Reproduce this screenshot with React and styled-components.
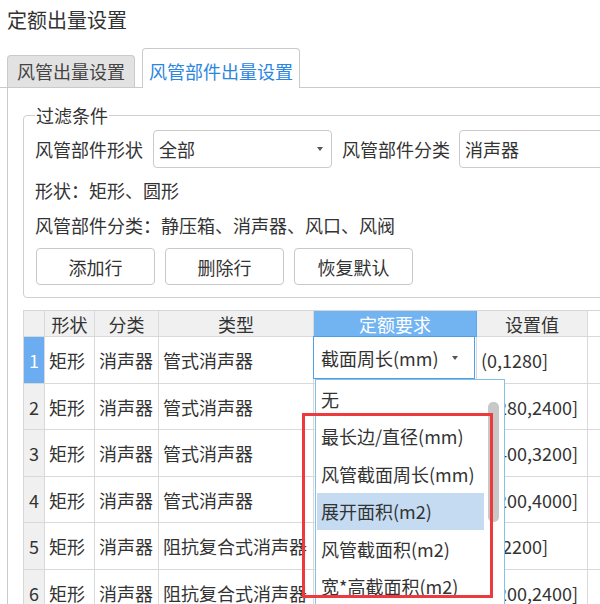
import React from 'react';
import styled, { createGlobalStyle } from 'styled-components';

const GlobalStyle = createGlobalStyle`
  html, body { margin: 0; padding: 0; background: #fff; }
  body { font-family: "Noto Sans CJK SC", "Noto Sans", sans-serif; color: #333; }
  * { box-sizing: border-box; }
`;

const Window = styled.div`
  width: 600px;
  height: 604px;
  overflow: hidden;
  background: #fff;
`;

const Title = styled.div`
  height: 40px;
  line-height: 40px;
  padding-left: 7px;
  font-size: 20px;
  color: #333;
`;

const TabBar = styled.div`
  display: flex;
  align-items: flex-end;
  height: 48px;
  padding-left: 7px;
  border-bottom: 1px solid #cacaca;
`;

const Tab = styled.div`
  font-size: 18px;
  line-height: 30px;
  text-align: center;
  border: 1px solid #cacaca;
  border-bottom: none;
  border-radius: 4px 4px 0 0;
  width: ${p => (p.$active ? '158px' : '128px')};
  height: ${p => (p.$active ? '40px' : '32px')};
  padding-top: ${p => (p.$active ? '7px' : '0')};
  margin-left: ${p => (p.$active ? '7px' : '0')};
  margin-bottom: ${p => (p.$active ? '-1px' : '0')};
  background: ${p => (p.$active ? '#fff' : '#e2e2e2')};
  color: ${p => (p.$active ? '#2a86e0' : '#444')};
`;

const Panel = styled.div`
  margin-left: 7px;
  border-left: 1px solid #cacaca;
  padding: 16px 0 0 15px;
  height: 520px;
`;

const FilterSet = styled.fieldset`
  margin: 0;
  width: 700px;
  min-width: 0;
  padding: 0 12px 12px 11px;
  border: 1px solid #cfcfcf;
  border-radius: 4px;
  display: flex;
  flex-direction: column;
  gap: 10px;
`;

const Legend = styled.legend`
  padding: 0 1px;
  font-size: 18px;
  line-height: 22px;
  color: #333;
`;

const FieldRow = styled.div`
  display: flex;
  align-items: center;
  margin-top: 4px;
  height: 38px;
`;

const Label = styled.span`
  font-size: 18px;
  width: ${p => p.$w || 'auto'};
  margin-left: ${p => p.$ml || '0'};
  white-space: nowrap;
`;

const Select = styled.div`
  display: flex;
  align-items: center;
  justify-content: space-between;
  width: ${p => p.$w};
  height: 38px;
  border: 1px solid #cbcbcb;
  border-radius: 4px;
  padding: 0 8px 0 5px;
  font-size: 18px;
  background: #fff;
`;

const Caret = styled.span`
  width: 0;
  height: 0;
  border-left: 3.5px solid transparent;
  border-right: 3.5px solid transparent;
  border-top: 4px solid #555;
`;

const InfoLine = styled.div`
  font-size: 18px;
  line-height: 25px;
  white-space: nowrap;
`;

const Buttons = styled.div`
  display: flex;
  gap: 10px;
  padding-left: 1px;
`;

const Button = styled.button`
  width: 119px;
  height: 37px;
  border: 1px solid #c9c9c9;
  border-radius: 4px;
  background: #fff;
  font-family: inherit;
  font-size: 18px;
  color: #333;
  padding: 0;
`;

const TableWrap = styled.div`
  position: relative;
  margin-top: 12px;
`;

const Grid = styled.div`
  display: grid;
  grid-template-columns: 21px 50px 64px 155px 163px 111px 60px;
  grid-template-rows: 26px 47px 46px 47px 46px 47px 47px;
  border-top: 1px solid #d6d6d6;
  border-left: 1px solid #d6d6d6;
  width: 700px;
`;

const Cell = styled.div`
  position: relative;
  display: flex;
  align-items: center;
  justify-content: ${p => (p.$center ? 'center' : 'flex-start')};
  padding-left: ${p => (p.$center ? '0' : '4px')};
  border-right: 1px solid ${p => (p.$sel ? '#5ea6ee' : '#d9d9d9')};
  border-bottom: 1px solid ${p => (p.$sel ? '#5ea6ee' : '#d9d9d9')};
  font-size: 18px;
  white-space: nowrap;
  background: ${p => p.$bg || '#fff'};
  color: ${p => p.$fg || '#333'};
`;

const Editor = styled.div`
  position: absolute;
  top: -1px;
  left: -1px;
  width: 162px;
  height: 43px;
  border: 1.5px solid #4f9ee8;
  background: #fff;
  display: flex;
  align-items: center;
  justify-content: space-between;
  padding: 0 16px 0 7px;
  z-index: 1;
`;

const Dropdown = styled.div`
  position: absolute;
  left: 292px;
  top: 69px;
  width: 190px;
  height: 240px;
  border: 1px solid #86c1e6;
  background: #fff;
  display: flex;
  z-index: 2;
`;

const OptionList = styled.div`
  width: 169px;
  padding: 0 1px;
`;

const Option = styled.div`
  height: 37.5px;
  display: flex;
  align-items: center;
  padding-left: 4px;
  font-size: 18px;
  white-space: nowrap;
  background: ${p => (p.$hl ? '#c4dbf2' : 'transparent')};
`;

const ScrollTrack = styled.div`
  flex: 1;
  padding: 22px 0 0 3px;
`;

const ScrollThumb = styled.div`
  width: 11px;
  height: 120px;
  border-radius: 5px;
  background: #c8c8c8;
`;

const Annotation = styled.div`
  position: absolute;
  left: 279px;
  top: 103px;
  width: 191px;
  height: 185px;
  border: 3px solid #ee3a3c;
  z-index: 3;
`;

const headers = ['', '形状', '分类', '类型', '定额要求', '设置值', ''];
const rows = [
  ['矩形', '消声器', '管式消声器', '(0,1280]'],
  ['矩形', '消声器', '管式消声器', '(1280,2400]'],
  ['矩形', '消声器', '管式消声器', '(2400,3200]'],
  ['矩形', '消声器', '管式消声器', '(3200,4000]'],
  ['矩形', '消声器', '阻抗复合式消声器', '(0,2200]'],
  ['矩形', '消声器', '阻抗复合式消声器', '(2200,2400]'],
];
const options = ['无', '最长边/直径(mm)', '风管截面周长(mm)', '展开面积(m2)', '风管截面积(m2)', '宽*高截面积(m2)'];

const BLUE = '#72b3f2';
const HEAD = '#f0f0f0';

export default function App() {
  return (
    <Window>
      <GlobalStyle />
      <Title>定额出量设置</Title>
      <TabBar>
        <Tab>风管出量设置</Tab>
        <Tab $active>风管部件出量设置</Tab>
      </TabBar>
      <Panel>
        <FilterSet>
          <Legend>过滤条件</Legend>
          <FieldRow>
            <Label $w="118px">风管部件形状</Label>
            <Select $w="179px">
              <span>全部</span>
              <Caret />
            </Select>
            <Label $w="117px" $ml="10px">风管部件分类</Label>
            <Select $w="200px">
              <span>消声器</span>
            </Select>
          </FieldRow>
          <InfoLine>形状：矩形、圆形</InfoLine>
          <InfoLine>风管部件分类：静压箱、消声器、风口、风阀</InfoLine>
          <Buttons>
            <Button>添加行</Button>
            <Button>删除行</Button>
            <Button>恢复默认</Button>
          </Buttons>
        </FilterSet>
        <TableWrap>
          <Grid>
            {headers.map((h, i) => (
              <Cell
                key={'h' + i}
                $center
                $sel={i === 4}
                $bg={i === 4 ? BLUE : i === 6 ? '#fff' : HEAD}
                $fg={i === 4 ? '#fff' : '#333'}
              >
                {h}
              </Cell>
            ))}
            {rows.map((r, ri) => (
              <React.Fragment key={ri}>
                <Cell $center $bg={ri === 0 ? '#6cadf1' : HEAD} $fg={ri === 0 ? '#fff' : '#333'}>
                  {ri + 1}
                </Cell>
                <Cell>{r[0]}</Cell>
                <Cell>{r[1]}</Cell>
                <Cell>{r[2]}</Cell>
                <Cell>
                  {ri === 0 && (
                    <Editor>
                      <span>截面周长(mm)</span>
                      <Caret />
                    </Editor>
                  )}
                </Cell>
                <Cell>{r[3]}</Cell>
                <Cell />
              </React.Fragment>
            ))}
          </Grid>
          <Dropdown>
            <OptionList>
              {options.map((o, i) => (
                <Option key={o} $hl={i === 3}>{o}</Option>
              ))}
            </OptionList>
            <ScrollTrack>
              <ScrollThumb />
            </ScrollTrack>
          </Dropdown>
          <Annotation />
        </TableWrap>
      </Panel>
    </Window>
  );
}
